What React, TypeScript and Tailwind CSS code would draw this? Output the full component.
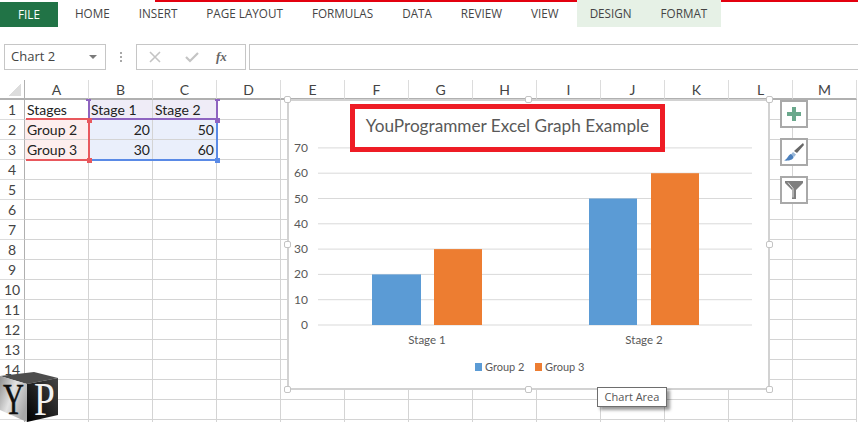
import { Fragment } from "react";

const tabs = ["HOME", "INSERT", "PAGE LAYOUT", "FORMULAS", "DATA", "REVIEW", "VIEW"];
const columns = ["A", "B", "C", "D", "E", "F", "G", "H", "I", "J", "K", "L", "M"];
const rows = Array.from({ length: 17 }, (_, i) => i + 1);

const cells: Record<string, { text: string; right?: boolean; tint: string }> = {
  A1: { text: "Stages", tint: "" },
  B1: { text: "Stage 1", tint: "bg-[#efecf7]" },
  C1: { text: "Stage 2", tint: "bg-[#efecf7]" },
  A2: { text: "Group 2", tint: "bg-[#fdeeee]" },
  A3: { text: "Group 3", tint: "bg-[#fdeeee]" },
  B2: { text: "20", right: true, tint: "bg-[#eaeffb]" },
  C2: { text: "50", right: true, tint: "bg-[#eaeffb]" },
  B3: { text: "30", right: true, tint: "bg-[#eaeffb]" },
  C3: { text: "60", right: true, tint: "bg-[#eaeffb]" },
};

const ticks = [0, 10, 20, 30, 40, 50, 60, 70];
const yFor = (v: number) => 325 - v * 2.53;

const bars = [
  { x: 372, w: 49, v: 20, fill: "#5b9bd5" },
  { x: 434, w: 48, v: 30, fill: "#ed7d31" },
  { x: 589, w: 48, v: 50, fill: "#5b9bd5" },
  { x: 651, w: 48, v: 60, fill: "#ed7d31" },
];

function Ribbon() {
  return (
    <div className="relative flex h-[27px] font-['Open_Sans',sans-serif] text-[11.7px] text-[#444]">
      <div className="absolute left-[155px] right-0 top-0 h-[2px] bg-[#e3000f]" />
      <div className="mt-[2px] flex w-[58px] items-center justify-center bg-[#217346] text-white">FILE</div>
      <div className="ml-[17px] flex items-center gap-[29px]">
        {tabs.map((t) => (
          <span key={t}>{t}</span>
        ))}
      </div>
      <div className="relative ml-[18px] flex items-center gap-[29px] bg-[#e6f1e6] pl-[13px] pr-[14px]">
        <span>DESIGN</span>
        <span>FORMAT</span>
      </div>
    </div>
  );
}

function FormulaBar() {
  return (
    <div className="mt-[17px] flex h-[26px] pl-[4px] text-[#555]">
      <div className="flex w-[102px] items-center justify-between border border-[#c6c6c6] pl-[6px] pr-[8px] font-['Open_Sans',sans-serif] text-[13px] text-[#444]">
        <span>Chart 2</span>
        <span className="h-0 w-0 border-x-[4px] border-t-[4px] border-x-transparent border-t-[#7a7a7a]" />
      </div>
      <div className="flex w-[30px] flex-col items-center justify-center gap-[2px]">
        <span className="h-[2px] w-[2px] bg-[#a8a8a8]" />
        <span className="h-[2px] w-[2px] bg-[#a8a8a8]" />
        <span className="h-[2px] w-[2px] bg-[#a8a8a8]" />
      </div>
      <div className="flex w-[110px] items-center border border-[#c6c6c6]">
        <svg width="12" height="12" viewBox="0 0 12 12" className="ml-[12px]">
          <path d="M1 1L11 11M11 1L1 11" stroke="#c4c4c4" strokeWidth="1.6" fill="none" />
        </svg>
        <svg width="14" height="12" viewBox="0 0 14 12" className="ml-[24px]">
          <path d="M1 6L5 10L13 2" stroke="#c4c4c4" strokeWidth="2.2" fill="none" />
        </svg>
        <span className="ml-[17px] font-['Liberation_Serif',serif] text-[13px] font-bold italic text-[#666]">fx</span>
      </div>
      <div className="ml-[3px] flex-1 border-y border-l border-[#c6c6c6]" />
    </div>
  );
}

function Sheet() {
  return (
    <div className="relative mt-[10px] font-['Lato',sans-serif] text-[14px] text-[#222]">
      <div className="grid grid-cols-[25px_repeat(13,64px)] auto-rows-[20px]">
        <div className="border-b-2 border-r border-b-[#b0b0b0] border-r-[#b0b0b0] bg-white p-[4px_3px_3px_9px]">
          <div className="h-[12px] w-[12px] bg-[linear-gradient(135deg,transparent_50%,#dcdcdc_50%)]" />
        </div>
        {columns.map((c) => (
          <div
            key={c}
            className="flex items-center justify-center border-b-2 border-r border-b-[#b0b0b0] border-r-[#dcdcdc] text-[#444]"
          >
            {c}
          </div>
        ))}
        {rows.map((r) => (
          <Fragment key={r}>
            <div className="flex items-center justify-center border-b border-r border-b-[#dcdcdc] border-r-[#b0b0b0] text-[#444]">
              {r <= 14 ? r : ""}
            </div>
            {columns.map((c) => {
              const cell = cells[c + r];
              return (
                <div
                  key={c}
                  className={`flex items-center overflow-hidden whitespace-nowrap border-b border-r border-[#d4d4d4] px-[2px] ${
                    cell?.right ? "justify-end" : ""
                  } ${cell?.tint ?? ""}`}
                >
                  {cell?.text}
                </div>
              );
            })}
          </Fragment>
        ))}
      </div>
      <RangeMarks />
    </div>
  );
}

// coloured outlines Excel puts around the chart's source ranges, on a grid laid over the sheet
function RangeMarks() {
  return (
    <div className="pointer-events-none absolute inset-0 grid grid-cols-[25px_repeat(13,64px)] auto-rows-[20px]">
      <div className="col-start-3 col-end-5 row-start-2 row-end-3 -mx-[1px] border-x-2 border-b-2 border-[#8e64c0]" />
      <div className="col-start-2 col-end-3 row-start-3 row-end-5 -mb-[1px] -mr-[1px] -mt-[2px] ml-[1px] border-y-2 border-r-2 border-[#e8585d]" />
      <div className="col-start-3 col-end-5 row-start-3 row-end-5 -mb-[1px] -mr-[1px] ml-[2px] border-b-2 border-r-2 border-[#5a8ae6]" />

      <div className="col-start-3 row-start-2 -ml-[3px] -mt-[1px] h-[2px] w-[5px] bg-[#8e64c0]" />
      <div className="col-start-4 row-start-2 -mr-[3px] -mt-[1px] h-[2px] w-[5px] justify-self-end bg-[#8e64c0]" />
      <div className="col-start-4 row-start-2 -mb-[3px] -mr-[3px] h-[5px] w-[5px] self-end justify-self-end bg-[#8e64c0]" />
      <div className="col-start-2 row-start-2 -mb-[3px] -mr-[3px] h-[5px] w-[5px] self-end justify-self-end bg-[#e8585d]" />
      <div className="col-start-2 row-start-4 -mb-[3px] -mr-[3px] h-[5px] w-[5px] self-end justify-self-end bg-[#e8585d]" />
      <div className="col-start-4 row-start-4 -mb-[3px] -mr-[3px] h-[5px] w-[5px] self-end justify-self-end bg-[#5a8ae6]" />
    </div>
  );
}

function Handle({ place }: { place: string }) {
  return <div className={`-m-[5px] h-[7px] w-[7px] rounded-[2px] border border-[#c4c4c4] bg-white ${place}`} />;
}

function Chart() {
  return (
    <div className="absolute left-[287px] top-[99px] h-[291px] w-[483px] border-2 border-[#d2d2d2] bg-white font-['Lato',sans-serif] text-[#595959]">
      <svg className="block h-full w-full" viewBox="289 101 479 287">
        {ticks.map((t) => (
          <Fragment key={t}>
            <line x1="318" x2="752" y1={yFor(t)} y2={yFor(t)} stroke="#d9d9d9" strokeWidth="1" />
            <text x="308" y={yFor(t) + 4} textAnchor="end" fontSize="12" fill="#595959">
              {t}
            </text>
          </Fragment>
        ))}
        {bars.map((b) => (
          <rect key={b.x} x={b.x} y={yFor(b.v)} width={b.w} height={b.v * 2.53} fill={b.fill} />
        ))}
        <text x="427" y="344" textAnchor="middle" fontSize="11.5" fill="#595959">
          Stage 1
        </text>
        <text x="644" y="344" textAnchor="middle" fontSize="11.5" fill="#595959">
          Stage 2
        </text>
        <rect x="475" y="363" width="7" height="8" fill="#5b9bd5" />
        <text x="485" y="371" fontSize="11" fill="#595959">
          Group 2
        </text>
        <rect x="535" y="363" width="7" height="8" fill="#ed7d31" />
        <text x="545" y="371" fontSize="11" fill="#595959">
          Group 3
        </text>
      </svg>
      <div className="absolute left-[61px] top-[3px] flex h-[48px] w-[315px] items-center justify-center border-[5px] border-[#ee1c25] bg-white pb-[5px] text-[17.2px]">
        YouProgrammer Excel Graph Example
      </div>
      <div className="pointer-events-none absolute inset-0 grid grid-cols-3 grid-rows-3">
        <Handle place="place-self-start" />
        <Handle place="self-start justify-self-center" />
        <Handle place="self-start justify-self-end" />
        <Handle place="self-center justify-self-start" />
        <Handle place="col-start-3 self-center justify-self-end" />
        <Handle place="self-end justify-self-start" />
        <Handle place="self-end justify-self-center" />
        <Handle place="self-end justify-self-end" />
      </div>
    </div>
  );
}

function ChartButtons() {
  return (
    <div className="absolute left-[780px] top-[100px] flex flex-col gap-[10px]">
      <div className="flex h-[28px] w-[28px] items-center justify-center border-2 border-[#a9a9a9] bg-white">
        <svg width="14" height="14" viewBox="0 0 14 14">
          <path d="M5 0H9V5H14V9H9V14H5V9H0V5H5Z" fill="#6aa88c" />
        </svg>
      </div>
      <div className="flex h-[28px] w-[28px] items-center justify-center border-2 border-[#a9a9a9] bg-white">
        <svg width="20" height="18" viewBox="0 0 20 18">
          <path d="M19 0L20 2L13 10L10 8Z" fill="#666" />
          <path d="M9 9L12 11.5L10 14L7 11.5Z" fill="#9ab8d8" />
          <path d="M6.5 11C8 11.5 9.5 13 9.5 14.5C9 17 4 18 0 17.5C3 16.5 4 12.5 6.5 11Z" fill="#4c80bd" />
        </svg>
      </div>
      <div className="flex h-[28px] w-[28px] items-center justify-center border-2 border-[#a9a9a9] bg-white">
        <svg width="18" height="18" viewBox="0 0 18 18">
          <path d="M0 0H18V2L11 9V18H7V9L0 2Z" fill="#7f7f7f" />
          <path d="M3 1.5L8 7.5V16.5" stroke="#e4e4e4" strokeWidth="1" fill="none" />
        </svg>
      </div>
    </div>
  );
}

function Logo() {
  return (
    <svg className="absolute bottom-0 left-0" width="60" height="50" viewBox="0 372 60 50">
      <defs>
        <linearGradient id="leftFace" x1="0" x2="1" y1="0" y2="0.6">
          <stop offset="0" stopColor="#8f8f8f" />
          <stop offset="0.5" stopColor="#e2e2e2" />
          <stop offset="1" stopColor="#a8a8a8" />
        </linearGradient>
        <linearGradient id="rightFace" x1="0" x2="1" y1="1" y2="0">
          <stop offset="0" stopColor="#000" />
          <stop offset="1" stopColor="#444" />
        </linearGradient>
      </defs>
      <path d="M0 376L34 372L58 378L27 384Z" fill="#4d4d4d" />
      <path d="M0 376L27 384L27 422L0 410Z" fill="url(#leftFace)" />
      <path d="M27 384L58 378V415L27 422Z" fill="url(#rightFace)" />
      <text
        x="0"
        y="0"
        transform="translate(3 414) scale(0.66 1)"
        fontFamily="'Liberation Serif', serif"
        fontSize="44"
        fill="#111"
        stroke="#111"
        strokeWidth="0.5"
      >
        Y
      </text>
      <text
        x="0"
        y="0"
        transform="translate(34 415) scale(0.85 1.05)"
        fontFamily="'Liberation Serif', serif"
        fontSize="44"
        fill="#f2f2f2"
      >
        P
      </text>
    </svg>
  );
}

export default function App() {
  return (
    <div className="relative h-[422px] w-[858px] overflow-hidden bg-white">
      <Ribbon />
      <FormulaBar />
      <Sheet />
      <Chart />
      <ChartButtons />
      <div className="absolute left-[597px] top-[387px] flex h-[20px] w-[70px] items-center justify-center border border-[#6e6e6e] bg-white font-['Open_Sans',sans-serif] text-[11px] text-[#555] shadow-[3px_3px_3px_rgba(0,0,0,0.4)]">
        Chart Area
      </div>
      <Logo />
    </div>
  );
}
